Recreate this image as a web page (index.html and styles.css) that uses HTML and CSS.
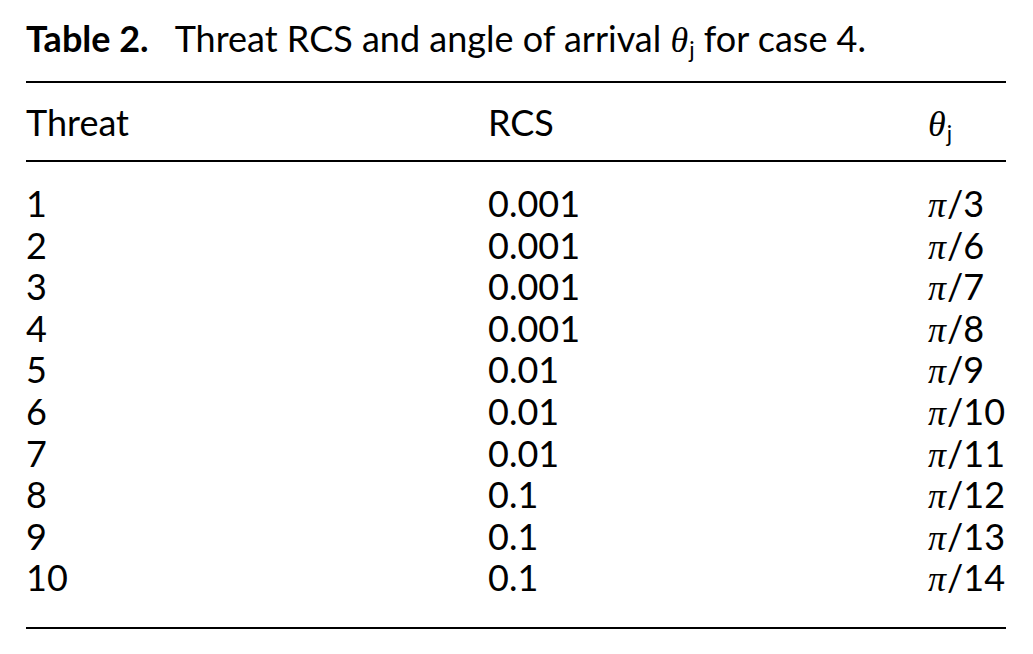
FILE: index.html
```html
<!DOCTYPE html>
<html lang="en">
<head>
<meta charset="utf-8">
<title>Table 2</title>
<link rel="stylesheet" href="styles.css">
</head>
<body>
<div class="page">
  <p class="caption"><span class="label">Table 2.</span>Threat RCS and angle of arrival <span class="math">θ</span><sub class="sub">j</sub> for case 4.</p>
  <table class="data">
    <thead>
      <tr><th class="c1">Threat</th><th class="c2">RCS</th><th class="c3"><span class="math">θ</span><sub class="sub">j</sub></th></tr>
    </thead>
    <tbody>
      <tr class="first"><td>1</td><td>0.001</td><td><span class="math">π</span>/3</td></tr>
      <tr><td>2</td><td>0.001</td><td><span class="math">π</span>/6</td></tr>
      <tr><td>3</td><td>0.001</td><td><span class="math">π</span>/7</td></tr>
      <tr><td>4</td><td>0.001</td><td><span class="math">π</span>/8</td></tr>
      <tr><td>5</td><td>0.01</td><td><span class="math">π</span>/9</td></tr>
      <tr><td>6</td><td>0.01</td><td><span class="math">π</span>/10</td></tr>
      <tr><td>7</td><td>0.01</td><td><span class="math">π</span>/11</td></tr>
      <tr><td>8</td><td>0.1</td><td><span class="math">π</span>/12</td></tr>
      <tr><td>9</td><td>0.1</td><td><span class="math">π</span>/13</td></tr>
      <tr class="last"><td>10</td><td>0.1</td><td><span class="math">π</span>/14</td></tr>
    </tbody>
  </table>
</div>
</body>
</html>
```

FILE: styles.css
```css
html, body {
  margin: 0;
  padding: 0;
  background: #fff;
}
body {
  font-family: Lato, "Open Sans", sans-serif;
  color: #000;
}
.page {
  padding: 17px 0 0 26px;
  width: 980px;
}
.caption {
  margin: 0 0 22px 0;
  font-size: 36px;
  line-height: 42px;
  white-space: nowrap;
}
.label {
  font-weight: 700;
  margin-right: 26px;
}
.math {
  font-family: "Liberation Serif", "DejaVu Serif", serif;
  font-style: italic;
  line-height: 0;
  margin-right: 1px;
}
.sub {
  font-size: 0.62em;
  line-height: 0;
  vertical-align: -0.25em;
}
.data {
  width: 980px;
  border-collapse: collapse;
  font-size: 36px;
  line-height: 41.6px;
  border-top: 2px solid #000;
  border-bottom: 2px solid #000;
}
.data th, .data td {
  padding: 0;
  text-align: left;
  font-weight: 400;
  white-space: nowrap;
}
.data thead th {
  padding: 18px 0 17px 0;
  border-bottom: 2px solid #000;
  line-height: 42px;
}
.c1 { width: 462px; }
.c2 { width: 440px; }
.data tr.first td { padding-top: 21px; }
.data tr.last td { padding-bottom: 28px; }
```
